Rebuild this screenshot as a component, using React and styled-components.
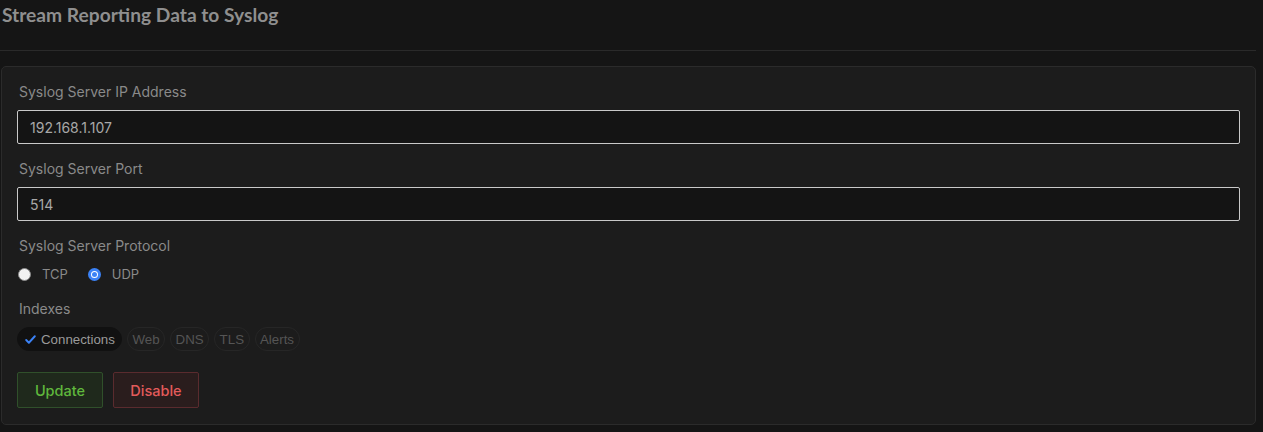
import styled, { createGlobalStyle } from "styled-components"
import { useState } from "react"

const Global = createGlobalStyle`
  html, body {
    margin: 0;
    padding: 0;
    background: #151515;
  }
  body {
    font-family: Inter, "Noto Sans", sans-serif;
  }
`

const Page = styled.div`
  width: 1256px;
`

const Title = styled.h2`
  margin: 0;
  padding: 2px 2px 0;
  height: 32px;
  line-height: 26px;
  font-family: Lato, "Open Sans", sans-serif;
  font-weight: 700;
  font-size: 19.2px;
  color: #8f8f8f;
`

const Divider = styled.hr`
  margin: 16px 0 15px;
  border: 0;
  border-top: 1px solid #2a2a2a;
`

const Card = styled.section`
  margin-left: 1px;
  padding: 15px 15px 16px;
  background: #1c1c1c;
  border: 1px solid #2b2b2b;
  border-radius: 5px;
  display: flex;
  flex-direction: column;
`

const Label = styled.label`
  display: block;
  height: 20px;
  line-height: 20px;
  padding-left: 2px;
  margin: ${(p) => (p.$first ? "0" : "15px")} 0 8px;
  font-size: 14px;
  color: #8a8a8a;
`

const Input = styled.input`
  box-sizing: border-box;
  width: 100%;
  height: 34px;
  padding: 0 12px;
  background: #141414;
  border: 1px solid #c9c9c9;
  border-radius: 2px;
  color: #a8a8a8;
  font-family: inherit;
  font-size: 14px;
  outline: none;
`

const RadioRow = styled.div`
  display: flex;
  align-items: center;
  gap: 20px;
  height: 20px;
  padding-left: 1px;
`

const RadioOption = styled.label`
  display: flex;
  align-items: center;
  gap: 11px;
  font-size: 13px;
  color: #8a8a8a;
  cursor: pointer;
`

const RadioDot = styled.span`
  box-sizing: border-box;
  width: 13px;
  height: 13px;
  border-radius: 50%;
  background: ${(p) => (p.$on ? "#fff" : "#f2f2f2")};
  border: ${(p) => (p.$on ? "3px solid #3b82f6" : "1px solid #8a8a8a")};
  display: flex;
  align-items: center;
  justify-content: center;
  &::after {
    content: "";
    width: 5px;
    height: 5px;
    border-radius: 50%;
    background: ${(p) => (p.$on ? "#3b82f6" : "transparent")};
  }
`

const Chips = styled.div`
  display: flex;
  gap: 5px;
`

const Chip = styled.button`
  display: flex;
  align-items: center;
  gap: 4px;
  height: 24px;
  padding: 0 ${(p) => (p.$on ? "6px" : "4.5px")};
  border-radius: 12px;
  border: 1px solid ${(p) => (p.$on ? "#111" : "#262626")};
  background: ${(p) => (p.$on ? "#111111" : "transparent")};
  color: ${(p) => (p.$on ? "#9a9a9a" : "#555")};
  font-family: "Liberation Sans", Arial, sans-serif;
  font-size: 13.3px;
  cursor: pointer;
`

const Actions = styled.div`
  display: flex;
  gap: 10px;
  margin-top: 21px;
`

const Button = styled.button`
  width: 86px;
  height: 36px;
  border-radius: 2px;
  font-family: Inter, sans-serif;
  font-size: 14.5px;
  font-weight: 500;
  cursor: pointer;
  background: ${(p) => (p.$danger ? "#2a1d1d" : "#1f291c")};
  border: 1px solid ${(p) => (p.$danger ? "#5a2b2e" : "#30502b")};
  color: ${(p) => (p.$danger ? "#e35b5b" : "#5fb83c")};
`

const Check = () => (
  <svg width="13" height="13" viewBox="0 0 24 24" fill="none" stroke="#3b82f6" strokeWidth="3.5" strokeLinecap="round" strokeLinejoin="round">
    <path d="M4 13l5 5L20 6" />
  </svg>
)

const indexes = ["Connections", "Web", "DNS", "TLS", "Alerts"]

const App = () => {
  const [protocol, setProtocol] = useState("UDP")
  const [active, setActive] = useState(["Connections"])

  const toggle = (name) =>
    setActive((a) => (a.includes(name) ? a.filter((x) => x !== name) : [...a, name]))

  return (
    <Page>
      <Global />
      <Title>Stream Reporting Data to Syslog</Title>
      <Divider />
      <Card>
        <Label $first>Syslog Server IP Address</Label>
        <Input defaultValue="192.168.1.107" />

        <Label>Syslog Server Port</Label>
        <Input defaultValue="514" />

        <Label>Syslog Server Protocol</Label>
        <RadioRow>
          {["TCP", "UDP"].map((p) => (
            <RadioOption key={p} onClick={() => setProtocol(p)}>
              <RadioDot $on={protocol === p} />
              {p}
            </RadioOption>
          ))}
        </RadioRow>

        <Label>Indexes</Label>
        <Chips>
          {indexes.map((name) => {
            const on = active.includes(name)
            return (
              <Chip key={name} $on={on} onClick={() => toggle(name)}>
                {on && <Check />}
                {name}
              </Chip>
            )
          })}
        </Chips>

        <Actions>
          <Button>Update</Button>
          <Button $danger>Disable</Button>
        </Actions>
      </Card>
    </Page>
  )
}

export default App
